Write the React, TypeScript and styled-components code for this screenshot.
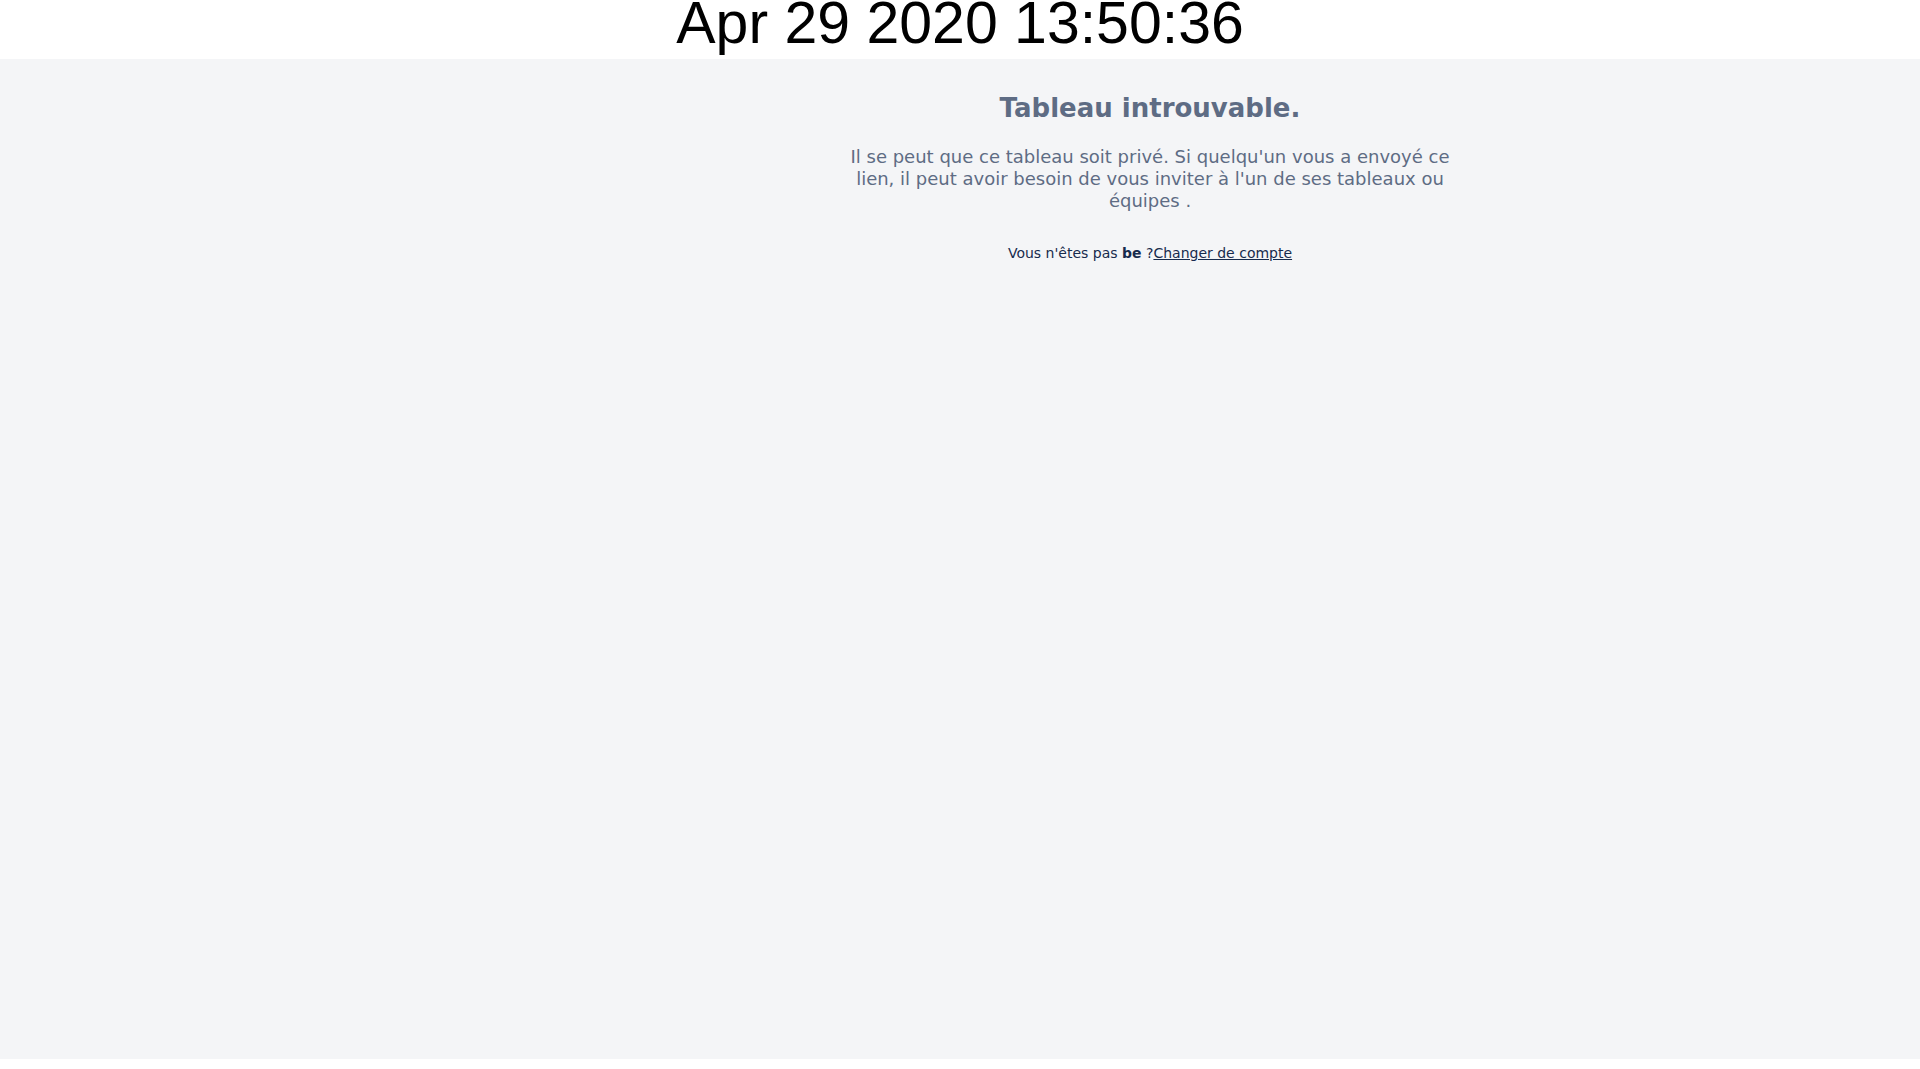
import React from "react";
import styled, { createGlobalStyle } from "styled-components";

const GlobalStyle = createGlobalStyle`
  html, body {
    margin: 0;
    padding: 0;
    background: #ffffff;
  }
  body {
    font-family: "DejaVu Sans", sans-serif;
  }
`;

const Header = styled.header`
  height: 59px;
  background: #ffffff;
  overflow: hidden;
  display: flex;
  justify-content: center;
`;

const Clock = styled.div`
  font-family: "Liberation Sans", Arial, sans-serif;
  font-size: 59px;
  line-height: 59px;
  margin-top: -6px;
  color: #000000;
  white-space: nowrap;
`;

const Page = styled.div`
  height: 1000px;
  background: #f4f5f7;
  display: grid;
  grid-template-columns: 380px 1fr;
`;

const Aside = styled.aside``;

const Main = styled.main`
  padding-top: 33px;
  display: flex;
  flex-direction: column;
  align-items: center;
  text-align: center;
`;

const Title = styled.h1`
  margin: 0;
  font-family: "DejaVu Sans", sans-serif;
  font-weight: bold;
  font-size: 26px;
  line-height: 32px;
  color: #5e6c84;
`;

const Message = styled.p`
  margin: 22px 0 0;
  max-width: 600px;
  font-size: 18px;
  line-height: 22px;
  color: #5e6c84;
`;

const Account = styled.p`
  margin: 31px 0 0;
  font-size: 14px;
  line-height: 20px;
  color: #172b4d;
`;

const Link = styled.a`
  color: #172b4d;
  text-decoration: underline;
`;

export default function App() {
  return (
    <>
      <GlobalStyle />
      <Header>
        <Clock>Apr 29 2020 13:50:36</Clock>
      </Header>
      <Page>
        <Aside />
        <Main>
          <Title>Tableau introuvable.</Title>
          <Message>
            Il se peut que ce tableau soit privé. Si quelqu'un vous a envoyé ce
            lien, il peut avoir besoin de vous inviter à l'un de ses tableaux ou
            équipes .
          </Message>
          <Account>
            Vous n'êtes pas <b>be</b> ?<Link href="#">Changer de compte</Link>
          </Account>
        </Main>
      </Page>
    </>
  );
}
